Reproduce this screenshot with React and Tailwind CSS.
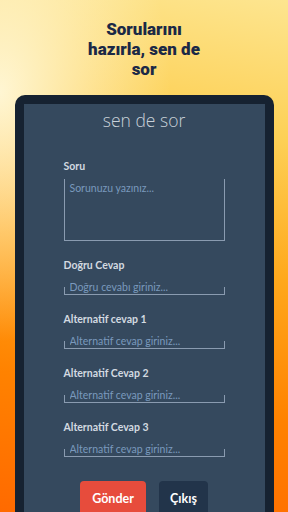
import { useState } from 'react';

const fields = [
  { label: 'Doğru Cevap', placeholder: 'Doğru cevabı giriniz...' },
  { label: 'Alternatif cevap 1', placeholder: 'Alternatif cevap giriniz...' },
  { label: 'Alternatif Cevap 2', placeholder: 'Alternatif cevap giriniz...' },
  { label: 'Alternatif Cevap 3', placeholder: 'Alternatif cevap giriniz...' }
];

const labelClass = 'block text-[10.5px] leading-[12px] font-bold text-[#d3dae1]';

const LineInput = ({ label, placeholder, value, onChange }) => (
  <div className="mt-[18px]">
    <label className={labelClass}>{label}</label>
    <div className="mt-[8px] flex h-[16px] items-end border-b border-[#8a9bb0]">
      <span className="h-[7px] w-px bg-[#8a9bb0]" />
      <input
        className="h-full min-w-0 flex-1 bg-transparent px-[5px] text-[10.5px] leading-[12px] text-[#d3dae1] outline-none placeholder:text-[#7a99bd]"
        value={value}
        onChange={onChange}
        placeholder={placeholder}
      />
      <span className="h-[7px] w-px bg-[#8a9bb0]" />
    </div>
  </div>
);

const App = () => {
  const [question, setQuestion] = useState('');
  const [answers, setAnswers] = useState(['', '', '', '']);

  const setAnswer = (index, value) => setAnswers((current) => current.map((item, i) => (i === index ? value : item)));

  return (
    <div className="flex h-[512px] w-[288px] flex-col items-center overflow-hidden bg-[radial-gradient(ellipse_at_0%_18%,rgba(255,250,225,0.9)_0%,rgba(255,240,180,0)_42%),linear-gradient(190deg,#fde58f_0%,#fdd055_25%,#ffa81c_50%,#ff8200_75%,#ff6a00_100%)] font-['Lato',sans-serif]">
      <h1 className="pt-[19px] text-center font-['Roboto',sans-serif] text-[17px] leading-[20px] font-black text-[#1b2946]">
        Sorularını
        <br />
        hazırla, sen de
        <br />
        sor
      </h1>

      <div className="mt-[16px] flex w-[259px] flex-1 flex-col rounded-t-[10px] bg-[#162231] px-[9px] pt-[9px]">
        <div className="flex flex-1 flex-col items-center bg-[#35495e]">
          <h2 className="mt-[4px] font-['Open_Sans',sans-serif] text-[17.5px] leading-[24px] font-light text-[#c9d1d9]">sen de sor</h2>

          <form className="mt-[28px] w-[161px]" onSubmit={(event) => event.preventDefault()}>
            <label className={labelClass}>Soru</label>
            <textarea
              className="mt-[7px] block h-[62px] w-full resize-none border-x border-b border-[#8a9bb0] bg-transparent px-[5px] pt-[2px] text-[10.5px] leading-[14px] text-[#d3dae1] outline-none placeholder:text-[#7a99bd]"
              value={question}
              onChange={(event) => setQuestion(event.target.value)}
              placeholder="Sorunuzu yazınız..."
            />

            {fields.map((field, index) => (
              <LineInput
                key={field.label}
                label={field.label}
                placeholder={field.placeholder}
                value={answers[index]}
                onChange={(event) => setAnswer(index, event.target.value)}
              />
            ))}

            <div className="mt-[24px] flex justify-center gap-[13px]">
              <button type="submit" className="h-[36px] w-[66px] rounded-[4px] bg-[#e74c3c] text-[12.5px] font-bold text-white">
                Gönder
              </button>
              <button type="button" className="h-[36px] w-[49px] rounded-[4px] bg-[#22344a] text-[12.5px] font-bold text-white">
                Çıkış
              </button>
            </div>
          </form>
        </div>
      </div>
    </div>
  );
};

export default App;
